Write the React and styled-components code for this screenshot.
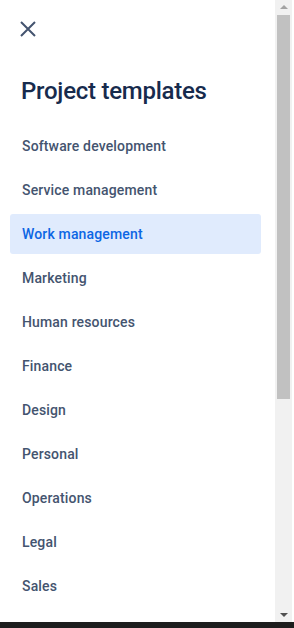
import React from 'react';
import styled, { createGlobalStyle } from 'styled-components';

const GlobalStyle = createGlobalStyle`
  html, body, #root {
    margin: 0;
    height: 100%;
  }
  body {
    background: #ffffff;
    font-family: Roboto, "Noto Sans", "Liberation Sans", sans-serif;
    overflow: hidden;
  }
`;

const Screen = styled.div`
  display: flex;
  flex-direction: column;
  height: 100%;
`;

const Window = styled.div`
  display: flex;
  height: 622px;
  padding-right: 2px;
  background: #ffffff;
`;

const Panel = styled.div`
  flex: 1;
  min-width: 0;
  overflow: hidden;
`;

// drawn scrollbar, the screenshot browser hides native ones
const Scrollbar = styled.div`
  width: 17px;
  display: flex;
  flex-direction: column;
  background: #f1f1f1;
`;

const ArrowButton = styled.div`
  height: 15px;
  display: flex;
  align-items: center;
  justify-content: center;

  &::before {
    content: '';
    width: 0;
    height: 0;
    border-left: 4px solid transparent;
    border-right: 4px solid transparent;
    ${(p) =>
      p.$down
        ? 'border-top: 4px solid #505050; margin-top: 1px;'
        : 'border-bottom: 4px solid #a3a3a3; margin-bottom: 1px;'}
  }
`;

const Track = styled.div`
  flex: 1;
  padding: 0 2px;
`;

const Thumb = styled.div`
  height: 384px;
  background: #c1c1c1;
`;

const BottomBar = styled.div`
  flex: 1;
  background: #1d1d1d;
`;

const Header = styled.div`
  padding: 17px 0 0 16px;
`;

const CloseButton = styled.button`
  display: flex;
  align-items: center;
  justify-content: center;
  width: 24px;
  height: 24px;
  padding: 0;
  border: none;
  background: none;
  color: #44546f;
  cursor: pointer;
`;

const Title = styled.h1`
  margin: 36px 0 0 21px;
  font-size: 24px;
  line-height: 28px;
  font-weight: 500;
  letter-spacing: -0.25px;
  color: #172b4d;
`;

const List = styled.ul`
  list-style: none;
  margin: 21px 0 0;
  padding: 0 14px 0 10px;
  display: flex;
  flex-direction: column;
  gap: 4px;
`;

const Item = styled.li`
  display: flex;
  align-items: center;
  height: 40px;
  padding-left: 12px;
  border-radius: 3px;
  font-size: 14px;
  font-weight: 500;
  letter-spacing: 0.15px;
  color: ${(p) => (p.$active ? '#0c66e4' : '#44546f')};
  background: ${(p) => (p.$active ? '#e0ebfd' : 'transparent')};
  cursor: pointer;
`;

const categories = [
  'Software development',
  'Service management',
  'Work management',
  'Marketing',
  'Human resources',
  'Finance',
  'Design',
  'Personal',
  'Operations',
  'Legal',
  'Sales',
];

const CloseIcon = () => (
  <svg width="16" height="16" viewBox="0 0 16 16" fill="none">
    <path d="M1 1L15 15M15 1L1 15" stroke="currentColor" strokeWidth="2" />
  </svg>
);

const App = () => (
  <>
    <GlobalStyle />
    <Screen>
      <Window>
        <Panel>
          <Header>
            <CloseButton aria-label="Close">
              <CloseIcon />
            </CloseButton>
          </Header>
          <Title>Project templates</Title>
          <List>
            {categories.map((name) => (
              <Item key={name} $active={name === 'Work management'}>
                {name}
              </Item>
            ))}
          </List>
        </Panel>
        <Scrollbar>
          <ArrowButton />
          <Track>
            <Thumb />
          </Track>
          <ArrowButton $down />
        </Scrollbar>
      </Window>
      <BottomBar />
    </Screen>
  </>
);

export default App;
